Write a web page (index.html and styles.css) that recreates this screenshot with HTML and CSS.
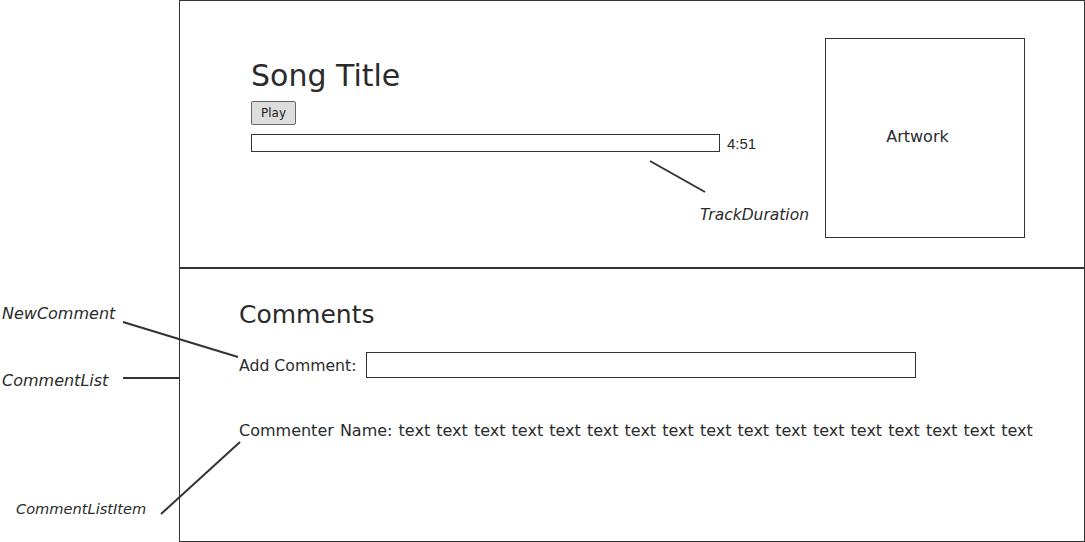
FILE: index.html
```html
<!DOCTYPE html>
<html>
<head>
<meta charset="utf-8">
<link rel="stylesheet" href="styles.css">
</head>
<body>
<div class="canvas">
  <div class="frame">
    <section class="player">
      <div class="track">
        <h1 class="song-title">Song Title</h1>
        <button class="play-btn">Play</button>
        <div class="progress-row">
          <div class="progress"></div>
          <span class="duration">4:51</span>
        </div>
      </div>
      <div class="artwork">Artwork</div>
    </section>
    <section class="comments">
      <h2 class="comments-title">Comments</h2>
      <div class="add-row">
        <label class="add-label">Add Comment:</label>
        <div class="add-input"></div>
      </div>
      <p class="comment-item">Commenter Name: text text text text text text text text text text text text text text text text text</p>
    </section>
  </div>

  <svg class="callouts" width="1085" height="542" viewBox="0 0 1085 542">
    <line x1="650" y1="161" x2="705" y2="192"/>
    <line x1="123" y1="322" x2="238" y2="357"/>
    <line x1="123" y1="378" x2="179" y2="378"/>
    <line x1="161" y1="514" x2="240" y2="442"/>
  </svg>
  <span class="note note-track">TrackDuration</span>
  <span class="note note-new">NewComment</span>
  <span class="note note-list">CommentList</span>
  <span class="note note-item">CommentListItem</span>
</div>
</body>
</html>
```
FILE: styles.css
```css
* { box-sizing: border-box; }
html, body { margin: 0; padding: 0; background: #fff; }
body {
  font-family: "DejaVu Sans", "Liberation Sans", sans-serif;
  color: #2b2b2b;
}
.canvas {
  position: relative;
  width: 1085px;
  height: 542px;
  padding-left: 179px;
}
.frame {
  width: 906px;
  height: 542px;
  border: 1px solid #333;
  display: flex;
  flex-direction: column;
}
.player {
  height: 268px;
  border-bottom: 2px solid #333;
  display: flex;
  padding: 37px 59px 0 71px;
}
.track {
  flex: 1;
  padding-top: 20px;
}
.song-title {
  margin: 0;
  font-size: 30px;
  font-weight: normal;
  line-height: 36px;
  height: 36px;
}
.play-btn {
  display: block;
  margin-top: 7px;
  width: 45px;
  height: 24px;
  padding: 0;
  font-family: "DejaVu Sans", sans-serif;
  font-size: 12px;
  color: #222;
  background: #ddd;
  border: 1px solid #666;
  border-radius: 2px;
}
.progress-row {
  display: flex;
  align-items: center;
  gap: 7px;
  margin-top: 9px;
}
.progress {
  width: 469px;
  height: 18px;
  border: 1px solid #333;
}
.duration {
  font-size: 15px;
  font-family: "Liberation Sans", sans-serif;
}
.artwork {
  width: 200px;
  height: 200px;
  border: 1px solid #333;
  display: flex;
  align-items: center;
  justify-content: center;
  font-size: 16px;
  padding: 0 15px 4px 0;
}
.comments {
  flex: 1;
  padding: 31px 0 0 59px;
}
.comments-title {
  margin: 0;
  font-size: 25px;
  font-weight: normal;
  line-height: 30px;
}
.add-row {
  display: flex;
  align-items: center;
  gap: 9px;
  margin-top: 22px;
}
.add-label { font-size: 15.7px; }
.add-input {
  width: 550px;
  height: 26px;
  border: 1px solid #333;
}
.comment-item {
  margin: 43px 0 0;
  font-size: 16px;
  line-height: 20px;
  word-spacing: 1px;
}
.callouts {
  position: absolute;
  left: 0;
  top: 0;
  pointer-events: none;
}
.callouts line {
  stroke: #333;
  stroke-width: 2;
}
.note {
  position: absolute;
  font-style: italic;
  font-size: 16px;
  line-height: 20px;
  white-space: nowrap;
}
.note-track { left: 700px; top: 205px; font-size: 15.5px; }
.note-new { left: 2px; top: 304px; }
.note-list { left: 2px; top: 371px; }
.note-item { left: 16px; top: 499px; font-size: 14.6px; }
```
